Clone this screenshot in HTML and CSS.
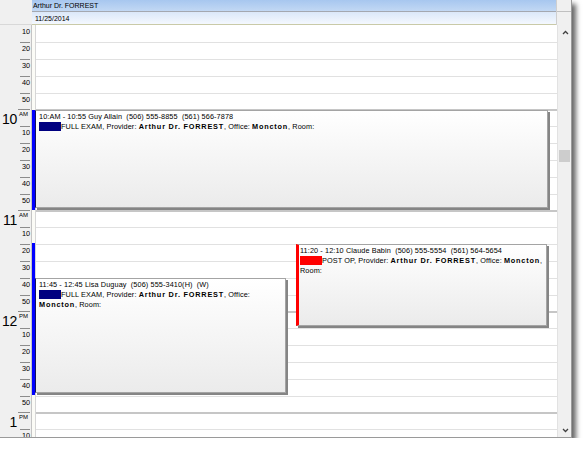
FILE: index.html
```
<!DOCTYPE html>
<html lang="en">

<head>
    <meta charset="UTF-8">
    <title>Day View - Arthur Dr. FORREST</title>
    <link rel="stylesheet" href="styles.css">
</head>

<body>
    <div class="window">
        <div class="head">
            <div class="corner"></div>
            <div class="titles">
                <div class="provider">Arthur Dr. FORREST</div>
                <div class="date">11/25/2014</div>
            </div>
            <div class="head-sb"></div>
        </div>

        <div class="body">
            <!-- time ruler, 10 minute rows -->
            <div class="times">
                <div class="row"><span class="min">10</span></div>
                <div class="row"><span class="min">20</span></div>
                <div class="row"><span class="min">30</span></div>
                <div class="row"><span class="min">40</span></div>
                <div class="row"><span class="min">50</span></div>
                <div class="row"><span class="hr">10</span><span class="ampm">AM</span></div>
                <div class="row"><span class="min">10</span></div>
                <div class="row"><span class="min">20</span></div>
                <div class="row"><span class="min">30</span></div>
                <div class="row"><span class="min">40</span></div>
                <div class="row"><span class="min">50</span></div>
                <div class="row"><span class="hr">11</span><span class="ampm">AM</span></div>
                <div class="row"><span class="min">10</span></div>
                <div class="row"><span class="min">20</span></div>
                <div class="row"><span class="min">30</span></div>
                <div class="row"><span class="min">40</span></div>
                <div class="row"><span class="min">50</span></div>
                <div class="row"><span class="hr">12</span><span class="ampm">PM</span></div>
                <div class="row"><span class="min">10</span></div>
                <div class="row"><span class="min">20</span></div>
                <div class="row"><span class="min">30</span></div>
                <div class="row"><span class="min">40</span></div>
                <div class="row"><span class="min">50</span></div>
                <div class="row"><span class="hr">1</span><span class="ampm">PM</span></div>
                <div class="row"><span class="min">10</span></div>
            </div>

            <!-- busy stripe -->
            <div class="busy">
                <div class="bar bar-1"></div>
                <div class="bar bar-2"></div>
            </div>

            <div class="day">
                <div class="slot first"></div>
                <div class="slot"></div>
                <div class="slot"></div>
                <div class="slot"></div>
                <div class="slot"></div>
                <div class="slot hour"></div>
                <div class="slot"></div>
                <div class="slot"></div>
                <div class="slot"></div>
                <div class="slot"></div>
                <div class="slot"></div>
                <div class="slot hour"></div>
                <div class="slot"></div>
                <div class="slot"></div>
                <div class="slot"></div>
                <div class="slot"></div>
                <div class="slot"></div>
                <div class="slot hour"></div>
                <div class="slot"></div>
                <div class="slot"></div>
                <div class="slot"></div>
                <div class="slot"></div>
                <div class="slot"></div>
                <div class="slot hour"></div>
                <div class="slot"></div>

                <div class="appt appt-1">
                    <p>10:AM - 10:55 Guy Allain&nbsp; (506) 555-8855&nbsp; (561) 566-7878</p>
                    <p><span class="tag navy"></span>FULL EXAM, Provider: <b>Arthur Dr. FORREST</b>, Office: <b>Moncton</b>, Room:</p>
                </div>

                <div class="appt appt-2 red-edge">
                    <p>11:20 - 12:10 Claude Babin&nbsp; (506) 555-5554&nbsp; (561) 564-5654</p>
                    <p><span class="tag red"></span>POST OP, Provider: <b>Arthur Dr. FORREST</b>, Office: <b>Moncton</b>, Room:</p>
                </div>

                <div class="appt appt-3">
                    <p>11:45 - 12:45 Lisa Duguay&nbsp; (506) 555-3410(H)&nbsp; (W)</p>
                    <p><span class="tag navy"></span>FULL EXAM, Provider: <b>Arthur Dr. FORREST</b>, Office: <b>Moncton</b>, Room:</p>
                </div>
            </div>

            <div class="scrollbar">
                <svg class="arrow" width="7" height="5" viewBox="0 0 7 5">
                    <polyline points="1,4 3.5,1.5 6,4" fill="none" stroke="#404040" stroke-width="1.3" />
                </svg>
                <div class="thumb"></div>
                <svg class="arrow down" width="7" height="5" viewBox="0 0 7 5">
                    <polyline points="1,1 3.5,3.5 6,1" fill="none" stroke="#404040" stroke-width="1.3" />
                </svg>
            </div>
        </div>
    </div>
</body>

</html>
```

FILE: styles.css
```
body {
    margin: 0;
    background-color: #ffffff;
    font-family: "Liberation Sans", Arial, sans-serif;
    color: #000;
}

.window {
    width: 571px;
    height: 437px;
    border-right: 1px solid #9a9a9a;
    border-bottom: 1px solid #9a9a9a;
    box-shadow: 4px 4px 5px rgba(0, 0, 0, 0.6);
    background-color: #f0f0f0;
    display: flex;
    flex-direction: column;
    overflow: hidden;
}

/* header */

.head {
    display: flex;
    height: 25px;
    flex-shrink: 0;
}

.corner {
    width: 32px;
    background-color: #f0f0f0;
    border-bottom: 1px solid #d8d8d8;
    box-sizing: border-box;
}

.titles {
    width: 525px;
    display: flex;
    flex-direction: column;
}

.provider {
    height: 11px;
    line-height: 11px;
    font-size: 7px;
    padding-left: 1px;
    background: linear-gradient(#a7c7ef, #c2d8f4);
    border-bottom: 1px solid #a4a8b0;
}

.date {
    height: 12px;
    line-height: 13px;
    font-size: 7px;
    padding-left: 3px;
    background: linear-gradient(#dbe8f9, #f4f8fe);
    border-bottom: 1px solid #c9caa8;
}

.head-sb {
    width: 14px;
    border-left: 1px solid #cfcfcf;
    background: linear-gradient(#f0f0f0 11px, #c0c0c0 11px, #c0c0c0 12px, #f0f0f0 12px);
}

/* body */

.body {
    display: flex;
    flex: 1;
    overflow: hidden;
}

.times {
    width: 31px;
    border-right: 1px solid #c4c4c4;
    background-color: #f0f0f0;
    flex-shrink: 0;
}

.row {
    height: 17px;
    display: flex;
    justify-content: flex-end;
    align-items: flex-start;
}

.row:nth-child(6n+5),
.slot:nth-child(6n+5) {
    height: 16px;
}

.min {
    width: 10px;
    margin-right: 1px;
    border-top: 1px solid #8c8c8c;
    font-size: 7.3px;
    line-height: 9px;
    padding-top: 1px;
    text-align: right;
}

.row:first-child .min {
    border-top-color: transparent;
}

.hr {
    font-size: 14px;
    line-height: 14px;
    padding-top: 3px;
    margin-right: 1px;
    letter-spacing: -0.3px;
}

.ampm {
    width: 12px;
    margin-right: 1px;
    border-top: 1px solid #8c8c8c;
    font-size: 6px;
    line-height: 7px;
    padding-top: 1px;
    text-align: left;
    padding-left: 1px;
    box-sizing: border-box;
}

.busy {
    width: 3px;
    position: relative;
    background-color: #fbfbf6;
    flex-shrink: 0;
}

.bar {
    position: absolute;
    left: 0;
    width: 3px;
    background-color: #0000ff;
}

.bar-1 {
    top: 85px;
    height: 100px;
}

.bar-2 {
    top: 218px;
    height: 152px;
}

.day {
    width: 521px;
    border-left: 1px solid #d6d6d6;
    background-color: #ffffff;
    position: relative;
    flex-shrink: 0;
}

.slot {
    height: 17px;
    box-sizing: border-box;
    border-top: 1px solid #e1e1e1;
}

.slot.first {
    border-top: none;
}

.slot.hour {
    border-top: 2px solid #c6c6c6;
}

/* appointments */

.appt {
    position: absolute;
    box-sizing: border-box;
    border: 1px solid #a4a4a4;
    border-left-color: #12125a;
    box-shadow: 2px 2px 0 #858585;
    background: linear-gradient(#ffffff, #ebebeb);
    padding: 1px 3px;
    font-size: 7.3px;
    letter-spacing: 0.1px;
    line-height: 10px;
    overflow: hidden;
}

.appt p {
    margin: 0;
}

.appt b {
    letter-spacing: 0.8px;
}

.appt-1 {
    left: -1px;
    top: 85px;
    width: 513px;
    height: 98px;
}

.appt-2 {
    left: 260px;
    top: 219px;
    width: 251px;
    height: 82px;
}

.appt-3 {
    left: -1px;
    top: 253px;
    width: 251px;
    height: 115px;
}

.red-edge {
    border-left: 3px solid #ff0000;
    padding-left: 1px;
}

.tag {
    display: inline-block;
    width: 22px;
    height: 9px;
    vertical-align: -2px;
}

.navy {
    background-color: #000080;
}

.red {
    background-color: #ff0000;
}

/* scrollbar */

.scrollbar {
    width: 14px;
    border-left: 1px solid #e2e2e2;
    background-color: #f0f0f0;
    position: relative;
}

.arrow {
    position: absolute;
    left: 4px;
    top: 5px;
}

.arrow.down {
    top: auto;
    bottom: 4px;
}

.thumb {
    position: absolute;
    left: 1px;
    top: 125px;
    width: 11px;
    height: 12px;
    background-color: #cdcdcd;
}
```
